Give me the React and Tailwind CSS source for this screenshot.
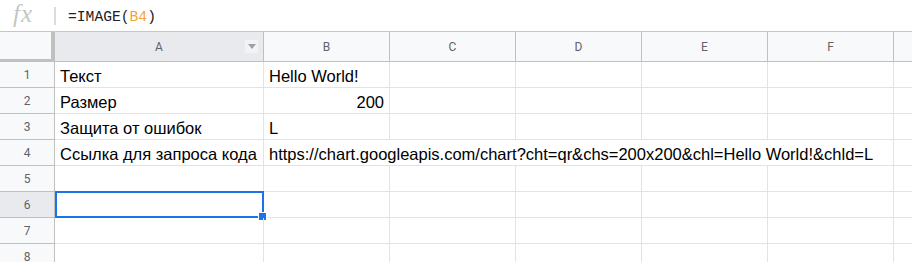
import React from "react";

const COLS = ["A", "B", "C", "D", "E", "F"];

const ROWS = [
  { a: "Текст", b: "Hello World!" },
  { a: "Размер", b: "200", right: true },
  { a: "Защита от ошибок", b: "L" },
  { a: "Ссылка для запроса кода", b: "https://chart.googleapis.com/chart?cht=qr&chs=200x200&chl=Hello World!&chld=L", span: true },
  {},
  { selected: true },
  {},
  {},
];

function FormulaBar() {
  return (
    <div className="flex h-[32px] border-b border-[#c4c7c5] bg-white">
      <div className="w-[54px] shrink-0 pl-[13px] -mt-[1px] text-[25px] italic leading-[30px] text-[#c4c7c5] font-['Liberation_Serif',serif] tracking-[1px]">
        fx
      </div>
      <div className="mt-[7px] h-[18px] w-[2px] bg-[#dadce0]" />
      <div className="pl-[12px] pt-[7px] text-[14.67px] leading-[20px] text-[#202124] font-['Liberation_Mono',monospace]">
        =IMAGE(<span className="text-[#f5a13a]">B4</span>)
      </div>
    </div>
  );
}

function HeaderRow() {
  return (
    <div className="flex h-[30px] bg-[#f8f9fa] text-[12px] text-[#5f6368] font-['Roboto',sans-serif]">
      <div className="w-[55px] shrink-0 border-r-[4px] border-b-[3px] border-[#c0c0c0]" />
      {COLS.map((c) => (
        <div
          key={c}
          className={`relative flex items-center justify-center border-r border-b border-[#c0c0c0] ${
            c === "A" ? "w-[209px] bg-[#e8eaed]" : "w-[126px]"
          } shrink-0`}
        >
          {c}
          {c === "A" && (
            <div className="absolute right-[5px] top-[8px] flex h-[13px] w-[13px] items-center justify-center bg-[#f1f3f4]">
              <div className="h-0 w-0 border-x-[4px] border-t-[5px] border-x-transparent border-t-[#9aa0a6]" />
            </div>
          )}
        </div>
      ))}
      <div className="flex-1 border-b border-[#c0c0c0]" />
    </div>
  );
}

function Row({ n, row }) {
  const cell = "shrink-0 h-full border-r border-b border-[#e2e3e3]";
  const text = "flex items-end h-full px-[5px] pb-[2px] leading-[18px] whitespace-nowrap";
  return (
    <div className="flex h-[26px] text-[16.5px] text-black font-['Liberation_Sans',Arial,sans-serif]">
      <div
        className={`w-[55px] shrink-0 flex items-center justify-center border-r border-b border-[#c0c0c0] text-[12px] text-[#5f6368] font-['Roboto',sans-serif] ${
          row.selected ? "bg-[#e8eaed]" : "bg-[#f8f9fa]"
        }`}
      >
        {n}
      </div>
      <div className={`relative w-[209px] ${cell}`}>
        <div className={text}>{row.a}</div>
        {row.selected && (
          <div className="absolute -top-[1px] left-0 -right-[1px] -bottom-[1px] border-2 border-[#1a73e8]">
            <div className="absolute -right-[5px] -bottom-[5px] h-[9px] w-[9px] border border-white bg-[#1a73e8]" />
          </div>
        )}
      </div>
      {row.span ? (
        <div className={`w-[630px] ${cell}`}>
          <div className={text}>{row.b}</div>
        </div>
      ) : (
        <>
          <div className={`w-[126px] ${cell}`}>
            <div className={`${text} ${row.right ? "justify-end" : ""}`}>{row.b}</div>
          </div>
          {[0, 1, 2, 3].map((i) => (
            <div key={i} className={`w-[126px] ${cell}`} />
          ))}
        </>
      )}
      <div className="flex-1 h-full border-b border-[#e2e3e3]" />
    </div>
  );
}

export default function App() {
  return (
    <div className="h-[262px] w-[912px] overflow-hidden bg-white">
      <FormulaBar />
      <HeaderRow />
      {ROWS.map((row, i) => (
        <Row key={i} n={i + 1} row={row} />
      ))}
    </div>
  );
}
